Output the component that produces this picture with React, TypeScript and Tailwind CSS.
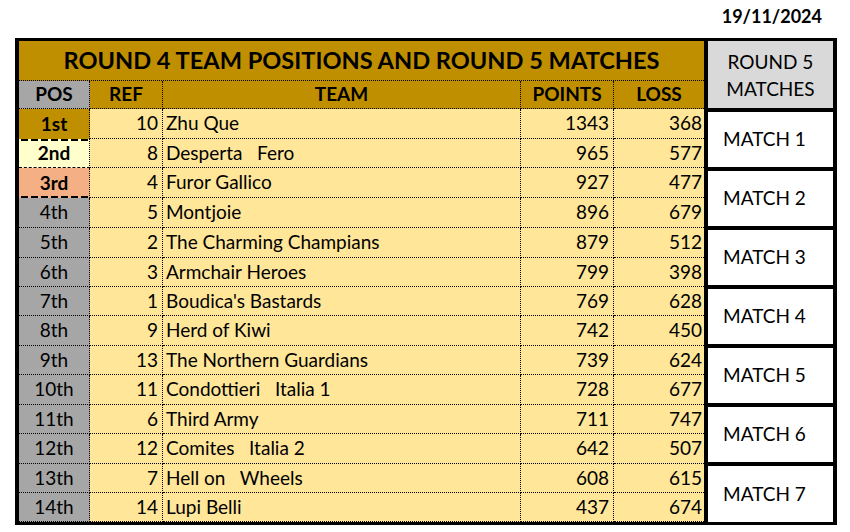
import React from 'react';

type Team = { pos: string; ref: number; name: string; points: number; loss: number };

const teams: Team[] = [
  { pos: '1st', ref: 10, name: 'Zhu Que', points: 1343, loss: 368 },
  { pos: '2nd', ref: 8, name: 'Desperta   Fero', points: 965, loss: 577 },
  { pos: '3rd', ref: 4, name: 'Furor Gallico', points: 927, loss: 477 },
  { pos: '4th', ref: 5, name: 'Montjoie', points: 896, loss: 679 },
  { pos: '5th', ref: 2, name: 'The Charming Champians', points: 879, loss: 512 },
  { pos: '6th', ref: 3, name: 'Armchair Heroes', points: 799, loss: 398 },
  { pos: '7th', ref: 1, name: "Boudica's Bastards", points: 769, loss: 628 },
  { pos: '8th', ref: 9, name: 'Herd of Kiwi', points: 742, loss: 450 },
  { pos: '9th', ref: 13, name: 'The Northern Guardians', points: 739, loss: 624 },
  { pos: '10th', ref: 11, name: 'Condottieri   Italia 1', points: 728, loss: 677 },
  { pos: '11th', ref: 6, name: 'Third Army', points: 711, loss: 747 },
  { pos: '12th', ref: 12, name: 'Comites   Italia 2', points: 642, loss: 507 },
  { pos: '13th', ref: 7, name: 'Hell on   Wheels', points: 608, loss: 615 },
  { pos: '14th', ref: 14, name: 'Lupi Belli', points: 437, loss: 674 },
];

// row heights taken from the sheet, they wobble between 29 and 30
const rowHeights = ['h-[30px]', 'h-[29px]', 'h-[30px]', 'h-[30px]', 'h-[30px]', 'h-[29px]', 'h-[29px]', 'h-[30px]', 'h-[29px]', 'h-[30px]', 'h-[29px]', 'h-[30px]', 'h-[29px]', 'h-[29px]'];

const cell = 'flex items-center border-r border-b border-dotted border-black';

// medium dashed rule drawn as a background so the dashes are long like Excel's
const dash = 'bg-[linear-gradient(to_right,#000_7px,transparent_7px)] bg-[length:10px_2px] bg-repeat-x';

const posStyle = (pos: string) => {
  if (pos === '1st') return 'bg-[#BF8F00] font-bold border-r border-dotted border-black';
  if (pos === '2nd') return `bg-[#FFFFCC] ${dash} bg-[position:2px_0] font-bold border-r border-b border-dotted [border-bottom-style:dashed] border-black`;
  if (pos === '3rd') return `bg-[#F4B084] ${dash} bg-[position:2px_100%] font-bold border-r border-dotted border-black`;
  return `bg-[#A6A6A6] ${cell}`;
};

const App: React.FC = () => {
  return (
    <div className="w-[850px] h-[532px] bg-white text-black font-['Lato',sans-serif]">
      <div className="h-[38px] flex justify-end pr-[28px] pt-[5px]">
        <span className="font-bold text-[18px] leading-[22px]">19/11/2024</span>
      </div>

      <div className="ml-[15px] w-[822px] flex border-x-4 border-y-[3px] border-black">
        {/* standings */}
        <div className="w-[685px] flex flex-col">
          <div className="h-[40px] flex items-center justify-center bg-[#BF8F00] border-b border-dotted border-black">
            <span className="font-bold text-[23.6px]">ROUND 4 TEAM POSITIONS AND ROUND 5 MATCHES</span>
          </div>
          <div className="h-[28px] flex font-bold text-[19px] bg-[#BF8F00]">
            <div className={`w-[71px] justify-center bg-[#A6A6A6] ${cell}`}>POS</div>
            <div className={`w-[73px] justify-center ${cell}`}>REF</div>
            <div className={`w-[358px] justify-center ${cell}`}>TEAM</div>
            <div className={`w-[93px] justify-center ${cell}`}>POINTS</div>
            <div className="w-[90px] flex items-center justify-center border-b border-dotted border-black">LOSS</div>
          </div>
          {teams.map((t, i) => (
            <div key={t.pos} className={`${rowHeights[i]} flex text-[19px] bg-[#FFE699]`}>
              <div className={`w-[71px] flex items-center justify-center ${posStyle(t.pos)}`}>{t.pos}</div>
              <div className={`w-[73px] justify-end pr-[4px] ${cell}`}>{t.ref}</div>
              <div className={`w-[358px] pl-[3px] whitespace-pre ${cell}`}>{t.name}</div>
              <div className={`w-[93px] justify-end pr-[4px] ${cell}`}>{t.points}</div>
              <div className="w-[90px] flex items-center justify-end pr-[2px] border-b border-dotted border-black">{t.loss}</div>
            </div>
          ))}
        </div>

        {/* round 5 matches */}
        <div className="w-[129px] flex flex-col border-l-4 border-black text-[19px]">
          <div className="h-[67px] flex flex-col items-center justify-center bg-[#D9D9D9] leading-[27px]">
            <span>ROUND 5</span>
            <span>MATCHES</span>
          </div>
          {[1, 2, 3, 4, 5, 6, 7].map((m) => (
            <div key={m} className={`${m === 7 ? 'flex-1' : 'h-[59px]'} flex items-center pl-[15px] bg-white border-t-4 border-black`}>
              MATCH {m}
            </div>
          ))}
        </div>
      </div>
    </div>
  );
};

export default App;
